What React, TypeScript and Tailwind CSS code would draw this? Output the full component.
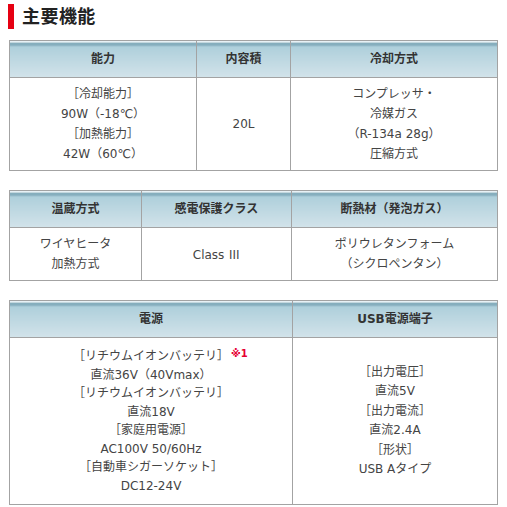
const font = { fontFamily: '"DejaVu Sans", "Noto Sans CJK JP", sans-serif' }

const headCls =
  'border border-[#a3a3a3] text-[12px] font-bold text-[#333] text-center align-middle bg-[linear-gradient(to_bottom,#ffffff_0px,#ffffff_1px,#86aebd_1px,#86aebd_4px,#aecfdb_5px,#d2e3ea_100%)]'
const cellCls = 'border border-[#a3a3a3] text-[12px] text-[#444] text-center align-middle'

const Lines = ({ lines, leading }: { lines: React.ReactNode[]; leading: string }) => (
  <div className={leading}>
    {lines.map((l, i) => (
      <div key={i}>{l}</div>
    ))}
  </div>
)

export default function App() {
  return (
    <div className="w-[507px] h-[507px] bg-white overflow-hidden" style={font}>
      <div className="flex items-center gap-2 pl-2 pt-1">
        <div className="w-[6px] h-[25px] bg-[#e60012]" />
        <h2 className="text-[18px] font-bold text-[#222] leading-[25px] tracking-wide">主要機能</h2>
      </div>

      <div className="mx-[9px] mt-[11px] flex flex-col gap-[19px]">
        <table className="w-[489px] border-collapse table-fixed">
          <colgroup>
            <col className="w-[187px]" />
            <col className="w-[94px]" />
            <col />
          </colgroup>
          <thead>
            <tr className="h-[37px]">
              <th className={headCls}>能力</th>
              <th className={headCls}>内容積</th>
              <th className={headCls}>冷却方式</th>
            </tr>
          </thead>
          <tbody>
            <tr className="h-[93px]">
              <td className={cellCls}>
                <Lines leading="leading-[20px]" lines={['［冷却能力］', '90W（-18℃）', '［加熱能力］', '42W（60℃）']} />
              </td>
              <td className={cellCls}>20L</td>
              <td className={cellCls}>
                <Lines leading="leading-[20px]" lines={['コンプレッサ・', '冷媒ガス', '（R-134a 28g）', '圧縮方式']} />
              </td>
            </tr>
          </tbody>
        </table>

        <table className="w-[489px] border-collapse table-fixed">
          <colgroup>
            <col className="w-[132px]" />
            <col className="w-[150px]" />
            <col />
          </colgroup>
          <thead>
            <tr className="h-[37px]">
              <th className={headCls}>温蔵方式</th>
              <th className={headCls}>感電保護クラス</th>
              <th className={headCls}>断熱材（発泡ガス）</th>
            </tr>
          </thead>
          <tbody>
            <tr className="h-[53px]">
              <td className={cellCls}>
                <Lines leading="leading-[20px]" lines={['ワイヤヒータ', '加熱方式']} />
              </td>
              <td className={cellCls}>
                Class <span className="font-['Noto_Sans_CJK_JP',sans-serif]">Ⅲ</span>
              </td>
              <td className={cellCls}>
                <Lines leading="leading-[20px]" lines={['ポリウレタンフォーム', '（シクロペンタン）']} />
              </td>
            </tr>
          </tbody>
        </table>

        <table className="w-[489px] border-collapse table-fixed">
          <colgroup>
            <col className="w-[283px]" />
            <col />
          </colgroup>
          <thead>
            <tr className="h-[37px]">
              <th className={headCls}>電源</th>
              <th className={headCls}>USB電源端子</th>
            </tr>
          </thead>
          <tbody>
            <tr className="h-[167px]">
              <td className={cellCls}>
                <Lines
                  leading="leading-[18.5px]"
                  lines={[
                    <span className="relative">
                      ［リチウムイオンバッテリ］
                      <span className="absolute left-full -top-[4px] ml-[2px] text-[10px] font-bold text-[#e60033] whitespace-nowrap">
                        ※1
                      </span>
                    </span>,
                    '直流36V（40Vmax）',
                    '［リチウムイオンバッテリ］',
                    '直流18V',
                    '［家庭用電源］',
                    'AC100V 50/60Hz',
                    '［自動車シガーソケット］',
                    'DC12-24V',
                  ]}
                />
              </td>
              <td className={cellCls}>
                <Lines
                  leading="leading-[19.5px]"
                  lines={['［出力電圧］', '直流5V', '［出力電流］', '直流2.4A', '［形状］', 'USB Aタイプ']}
                />
              </td>
            </tr>
          </tbody>
        </table>
      </div>
    </div>
  )
}
